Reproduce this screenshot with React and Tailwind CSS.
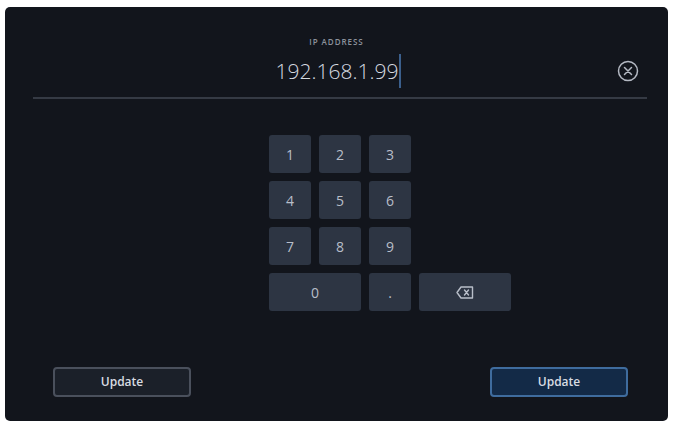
import React from 'react';

const keys = ['1', '2', '3', '4', '5', '6', '7', '8', '9'];

const Key = ({ children, wide = false }) => (
  <button
    className={`${wide ? 'col-span-2' : ''} h-[38px] rounded-[3px] bg-[#2d3543] text-[14px] text-[#b8bec9] flex items-center justify-center`}
  >
    {children}
  </button>
);

const BackspaceIcon = () => (
  <svg width="18" height="13" viewBox="0 0 18 13" fill="none" stroke="#b8bec9" strokeWidth="1.4" strokeLinejoin="round">
    <path d="M5 1h11.5v11H5L1 6.5z" />
    <path d="M8.5 4l4 5M12.5 4l-4 5" strokeLinecap="round" />
  </svg>
);

const ClearIcon = () => (
  <svg width="22" height="22" viewBox="0 0 22 22" fill="none" stroke="#b4b9c3" strokeWidth="1.5" strokeLinecap="round">
    <circle cx="11" cy="11" r="9.5" />
    <path d="M7.5 7.5l7 7M14.5 7.5l-7 7" />
  </svg>
);

export default function App() {
  return (
    <div className="w-[673px] h-[426px] bg-white pt-[7px] pl-[5px] font-['Open_Sans',sans-serif]">
      <div className="w-[663px] h-[414px] rounded-[5px] bg-[#12151c] flex flex-col">
        {/* field label + value */}
        <div className="pt-[30px] text-center text-[8px] font-semibold tracking-[0.12em] text-[#8d929c] leading-[10px]">
          IP ADDRESS
        </div>
        <div className="relative mt-[8px] h-[32px] flex items-center justify-center pl-[4px]">
          <span className="text-[21px] font-light text-[#d6dae0] leading-[32px]">192.168.1.99</span>
          <span className="ml-[1px] w-[2px] h-[34px] bg-[#3b5f8c]"></span>
          <div className="absolute right-[29px] top-[5px]">
            <ClearIcon />
          </div>
        </div>
        <div className="mt-[10px] ml-[28px] mr-[21px] h-[2px] bg-[#353a44]"></div>

        {/* keypad */}
        <div className="mt-[36px] ml-[264px] grid grid-cols-[repeat(5,42px)] gap-x-[8px] gap-y-[8px]">
          {keys.map((k, i) => (
            <React.Fragment key={k}>
              <Key>{k}</Key>
              {i % 3 === 2 && <div className="col-span-2"></div>}
            </React.Fragment>
          ))}
          <Key wide>0</Key>
          <Key>.</Key>
          <Key wide>
            <BackspaceIcon />
          </Key>
        </div>

        {/* actions */}
        <div className="mt-auto mb-[24px] flex justify-between pl-[48px] pr-[40px]">
          <button className="w-[138px] h-[30px] rounded-[4px] border-2 border-[#4a505c] bg-[#1b2029] text-[12px] font-semibold text-[#d8dce2]">
            Update
          </button>
          <button className="w-[138px] h-[30px] rounded-[4px] border-2 border-[#3f6c9e] bg-[#132a47] text-[12px] font-semibold text-[#d8dce2]">
            Update
          </button>
        </div>
      </div>
    </div>
  );
}
